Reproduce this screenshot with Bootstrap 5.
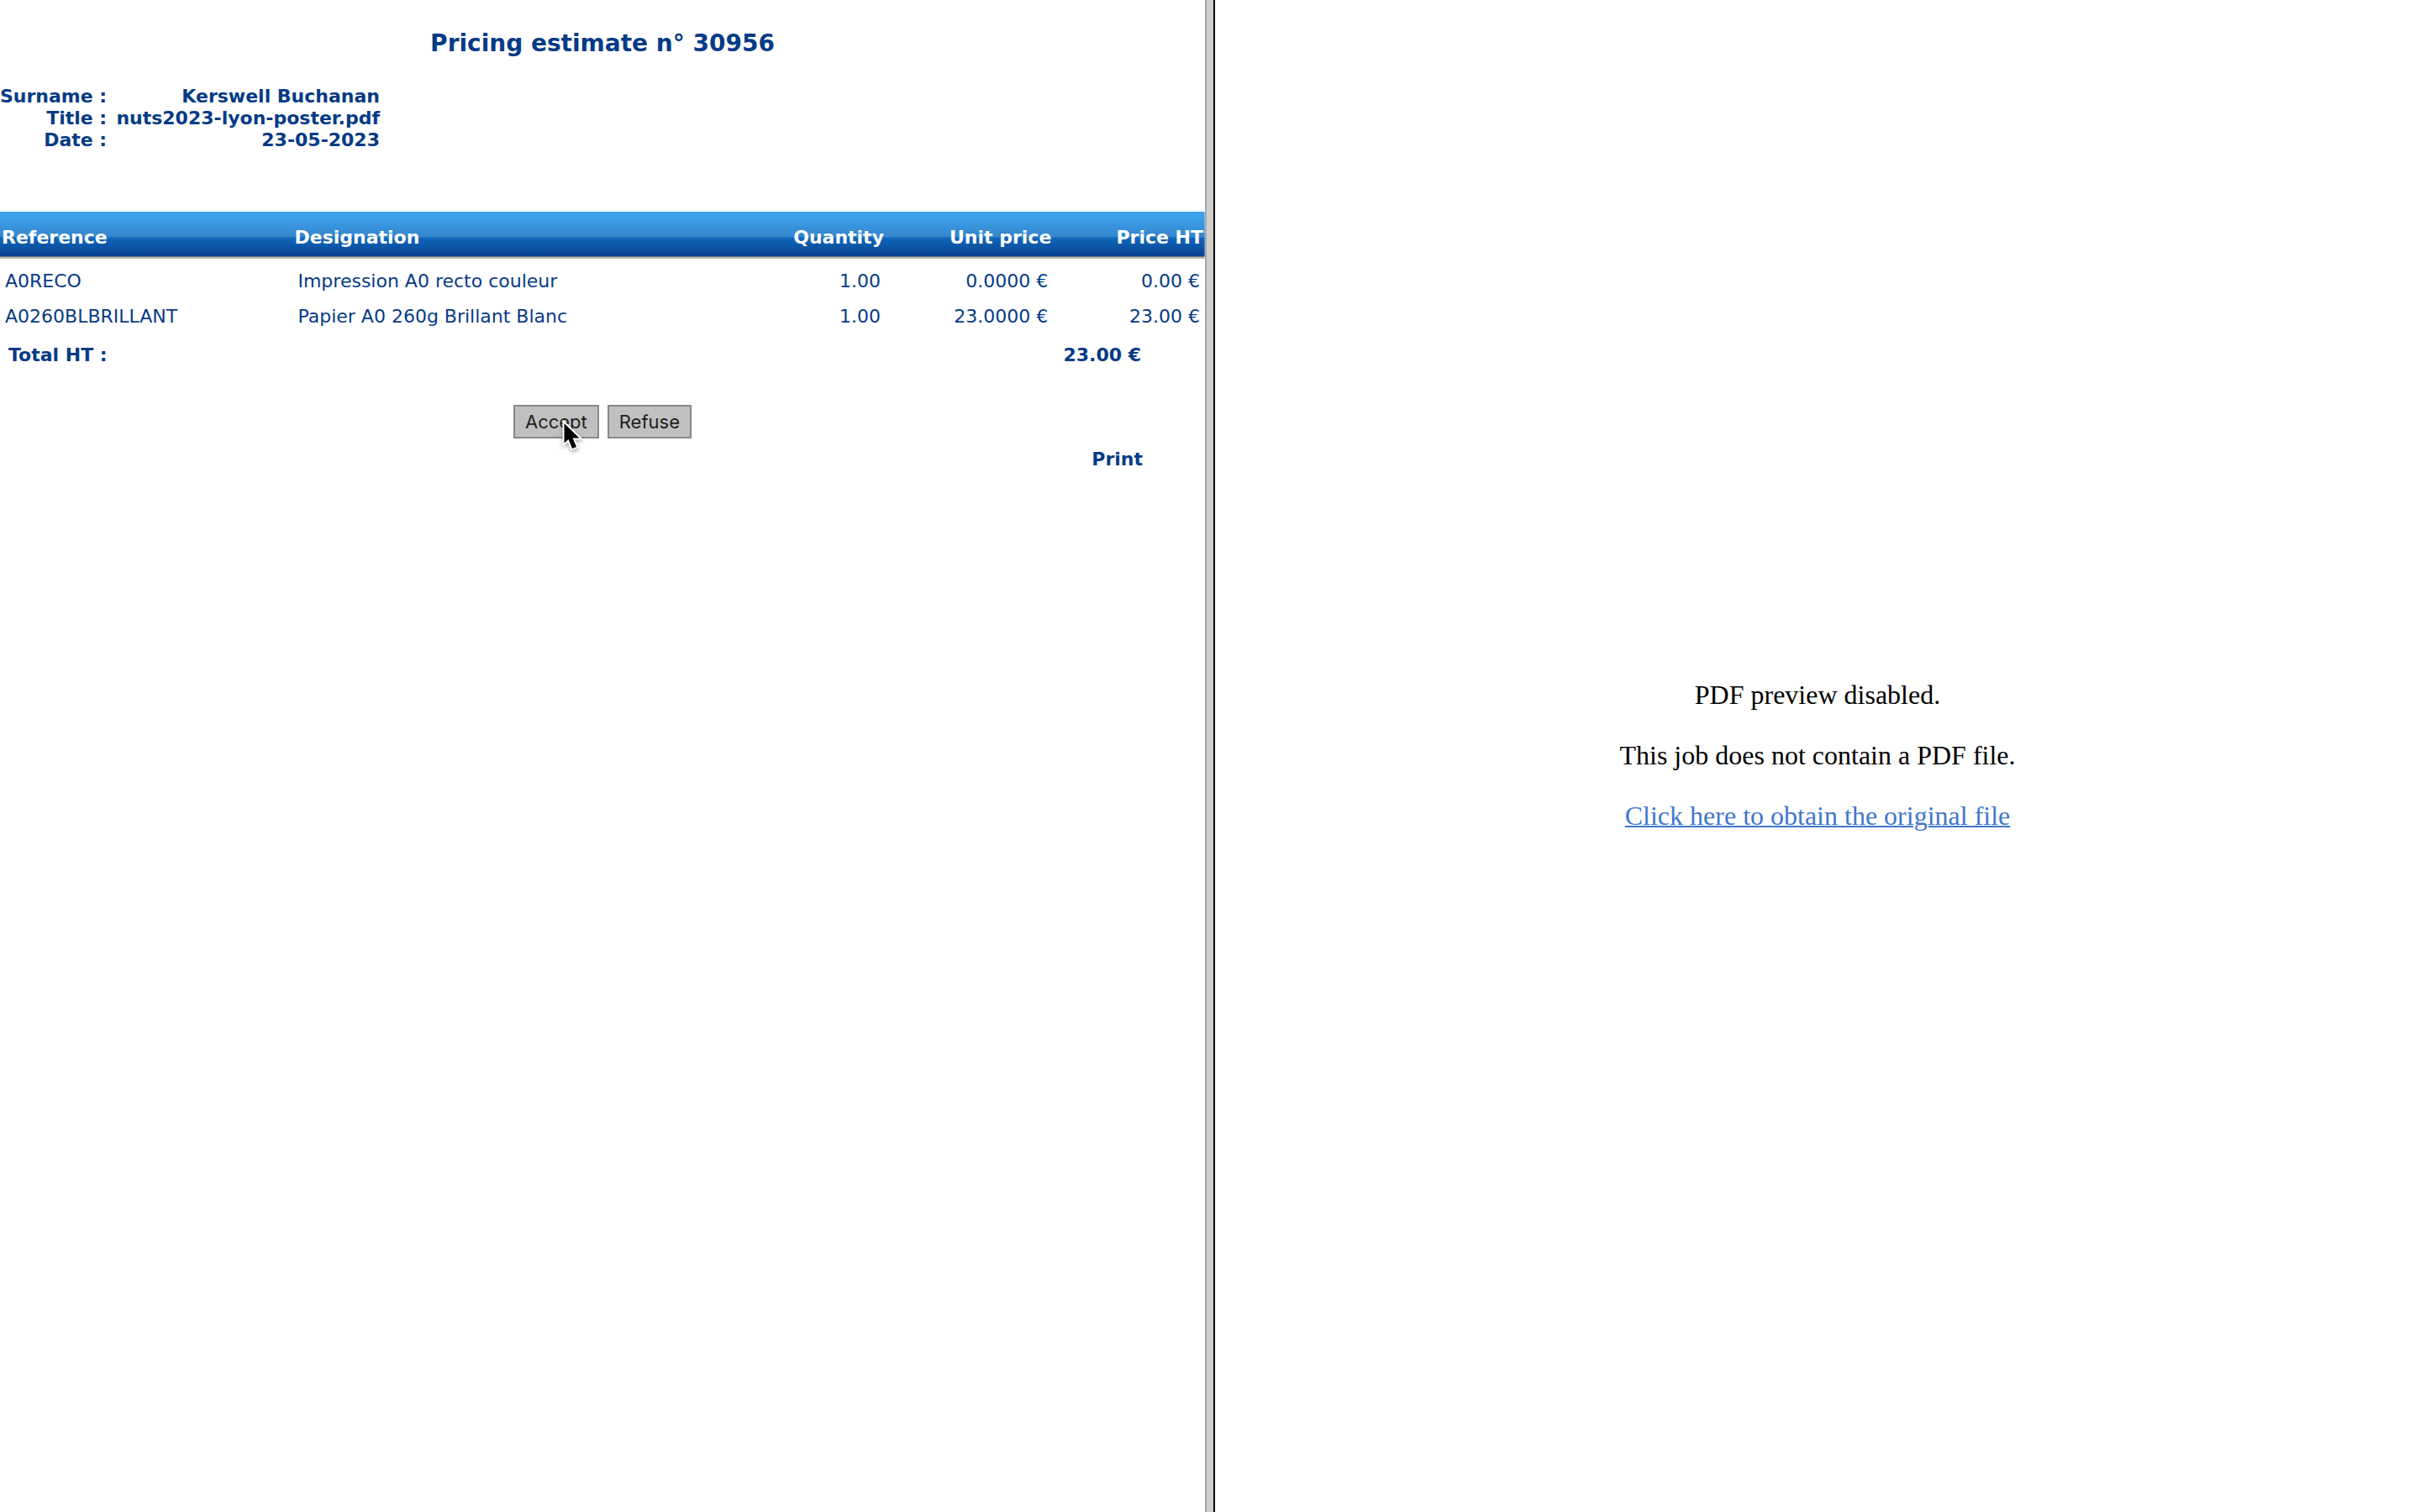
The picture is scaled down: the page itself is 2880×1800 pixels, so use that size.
<!DOCTYPE html>
<html lang="en">
<head>
<meta charset="utf-8">
<meta name="viewport" content="width=device-width, initial-scale=1">
<title>Pricing estimate n° 30956</title>
<link href="https://cdn.jsdelivr.net/npm/bootstrap@5.3.0/dist/css/bootstrap.min.css" rel="stylesheet">
<style>
  .estimate-pane { flex: 1 1 0; min-width: 0; background: #fff; color: #053b86; font: 22px/26px "DejaVu Sans", Verdana, sans-serif; }
  .preview-pane { flex: 1 1 0; min-width: 0; padding-bottom: 2px; background: #fff; color: #000; font: 32px/40px "Liberation Serif", "Times New Roman", serif; gap: 32px; }
  .preview-pane a { color: #3f77cb; text-decoration-thickness: 2px; }
  .pane-divider { width: 12px; background: #cfcfcf; border-left: 2px solid #a9a9a9; border-right: 2px solid #000; }

  .estimate-title { font-size: 28px; line-height: 36px; font-weight: 700; margin: 0; padding-top: 34px; }
  .job-info { width: 452px; margin-top: 32px; font-weight: 700; }
  .job-info th, .job-info td { padding: 0; text-align: right; white-space: nowrap; }
  .job-info th { width: 126px; }

  .price-table { --bs-table-color: #053b86; --bs-table-bg: transparent; table-layout: fixed; width: 100%; margin: 72px 0 0; color: #053b86; }
  .price-table th { height: 56px; padding: 6px 2px 0; color: #fff; font-weight: 700; vertical-align: middle; white-space: nowrap; }
  .price-table thead tr { background: linear-gradient(#3ba4f0 0, #3ba0ea 8px, #3584cb 30px, #1067bb 31px, #084391 53px, #64798f 53px, #64798f 54px, #babaa8 54px, #babaa8 56px); }
  .price-table td { height: 42px; padding: 0 6px; white-space: nowrap; vertical-align: middle; }
  .price-table tbody tr:first-child td { height: 48px; padding-top: 6px; }
  .total-line { padding: 12px 76px 0 10px; font-weight: 700; }
  .answer-form { gap: 10px; padding-top: 46px; }
  .answer-btn { height: 40px; padding: 0 12px; border: 2px solid #888; border-radius: 0; background: #c0c0c0; color: #1d1d1d; font: 22px/36px Inter, Roboto, sans-serif; }
  .answer-btn:hover { background: #b6b6b6; border-color: #888; color: #1d1d1d; }
  .pointer { left: 54px; top: 16px; width: 30px; height: 42px; pointer-events: none; filter: drop-shadow(0 2px 2px rgba(0, 0, 0, .35)); }
  .print-line { padding: 12px 74px 0 0; font-weight: 700; }
  .print-line a { color: inherit; text-decoration: none; }
</style>
<script src="https://cdn.jsdelivr.net/npm/bootstrap@5.3.0/dist/js/bootstrap.bundle.min.js"></script>
</head>
<body class="bg-white">
<div class="d-flex align-items-stretch min-vh-100">
  <main class="estimate-pane">
    <h1 class="estimate-title text-center">Pricing estimate n° 30956</h1>

    <table class="job-info">
      <tbody>
        <tr><th scope="row">Surname :</th><td>Kerswell Buchanan</td></tr>
        <tr><th scope="row">Title :</th><td>nuts2023-lyon-poster.pdf</td></tr>
        <tr><th scope="row">Date :</th><td>23-05-2023</td></tr>
      </tbody>
    </table>

    <table class="table table-borderless price-table">
      <colgroup>
        <col style="width:24.3%"><col style="width:38.2%"><col style="width:11%"><col style="width:13.9%"><col style="width:12.6%">
      </colgroup>
      <thead>
        <tr>
          <th scope="col">Reference</th>
          <th scope="col">Designation</th>
          <th scope="col" class="text-end">Quantity</th>
          <th scope="col" class="text-end">Unit price</th>
          <th scope="col" class="text-end">Price HT</th>
        </tr>
      </thead>
      <tbody>
        <tr><td>A0RECO</td><td>Impression A0 recto couleur</td><td class="text-end">1.00</td><td class="text-end">0.0000 €</td><td class="text-end">0.00 €</td></tr>
        <tr><td>A0260BLBRILLANT</td><td>Papier A0 260g Brillant Blanc</td><td class="text-end">1.00</td><td class="text-end">23.0000 €</td><td class="text-end">23.00 €</td></tr>
      </tbody>
    </table>

    <div class="total-line d-flex justify-content-between"><span>Total HT :</span><span>23.00 €</span></div>

    <form class="answer-form d-flex justify-content-center">
      <button type="button" class="btn answer-btn position-relative">Accept
        <svg class="pointer position-absolute" viewBox="0 0 30 42" aria-hidden="true">
          <path d="M4.500 4v23.500l5-4.500 4.500 11 5-2-4.500-10.500h8z" fill="#000" stroke="#fff" stroke-width="4" paint-order="stroke"/>
        </svg>
      </button>
      <button type="button" class="btn answer-btn">Refuse</button>
    </form>

    <div class="print-line text-end"><a href="#">Print</a></div>
  </main>

  <div class="pane-divider flex-shrink-0"></div>

  <section class="preview-pane d-flex flex-column align-items-center justify-content-center">
    <p class="m-0">PDF preview disabled.</p>
    <p class="m-0">This job does not contain a PDF file.</p>
    <p class="m-0"><a href="#">Click here to obtain the original file</a></p>
  </section>
</div>
</body>
</html>
